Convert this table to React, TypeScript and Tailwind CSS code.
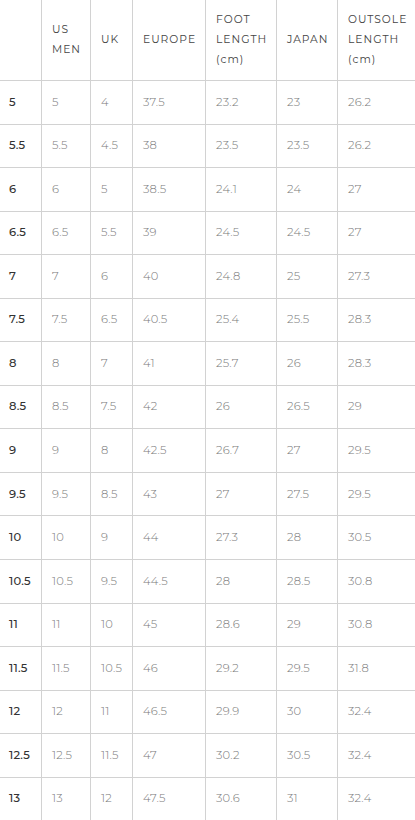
import React from "react";

const rows: string[][] = [
  ["5", "5", "4", "37.5", "23.2", "23", "26.2"],
  ["5.5", "5.5", "4.5", "38", "23.5", "23.5", "26.2"],
  ["6", "6", "5", "38.5", "24.1", "24", "27"],
  ["6.5", "6.5", "5.5", "39", "24.5", "24.5", "27"],
  ["7", "7", "6", "40", "24.8", "25", "27.3"],
  ["7.5", "7.5", "6.5", "40.5", "25.4", "25.5", "28.3"],
  ["8", "8", "7", "41", "25.7", "26", "28.3"],
  ["8.5", "8.5", "7.5", "42", "26", "26.5", "29"],
  ["9", "9", "8", "42.5", "26.7", "27", "29.5"],
  ["9.5", "9.5", "8.5", "43", "27", "27.5", "29.5"],
  ["10", "10", "9", "44", "27.3", "28", "30.5"],
  ["10.5", "10.5", "9.5", "44.5", "28", "28.5", "30.8"],
  ["11", "11", "10", "45", "28.6", "29", "30.8"],
  ["11.5", "11.5", "10.5", "46", "29.2", "29.5", "31.8"],
  ["12", "12", "11", "46.5", "29.9", "30", "32.4"],
  ["12.5", "12.5", "11.5", "47", "30.2", "30.5", "32.4"],
  ["13", "13", "12", "47.5", "30.6", "31", "32.4"],
];

const headers: string[][] = [
  [],
  ["US", "MEN"],
  ["UK"],
  ["EUROPE"],
  ["FOOT", "LENGTH", "(cm)"],
  ["JAPAN"],
  ["OUTSOLE", "LENGTH", "(cm)"],
];

const grid = "grid grid-cols-[41px_49px_42px_73px_71px_61px_1fr]";
const font = { fontFamily: "'Montserrat', 'DejaVu Sans', sans-serif" };

export default function App() {
  return (
    <div className="w-[415px] h-[820px] overflow-hidden bg-white" style={font}>
      <div className={`${grid} h-[81px] border-b border-[#d2d2d2]`}>
        {headers.map((h, i) => (
          <div
            key={i}
            className={`flex flex-col justify-center ${i === 0 ? "pl-[9px]" : "pl-[10px] border-l border-[#d2d2d2]"} text-[10.7px] leading-[20px] tracking-[1px] text-[#444]`}
          >
            {h.map((l, j) => (
              <span key={j} className="whitespace-nowrap">{l}</span>
            ))}
          </div>
        ))}
      </div>
      {rows.map((r, ri) => (
        <div key={ri} className={`${grid} h-[43.56px] border-b border-[#d2d2d2]`}>
          {r.map((c, ci) => (
            <div
              key={ci}
              className={`flex items-center ${ci === 0 ? "pl-[9px] font-medium text-[#333]" : "pl-[10px] font-light text-[#7a7a7a] border-l border-[#d2d2d2]"} text-[11.5px] tracking-[0.2px]`}
            >
              {c}
            </div>
          ))}
        </div>
      ))}
    </div>
  );
}
